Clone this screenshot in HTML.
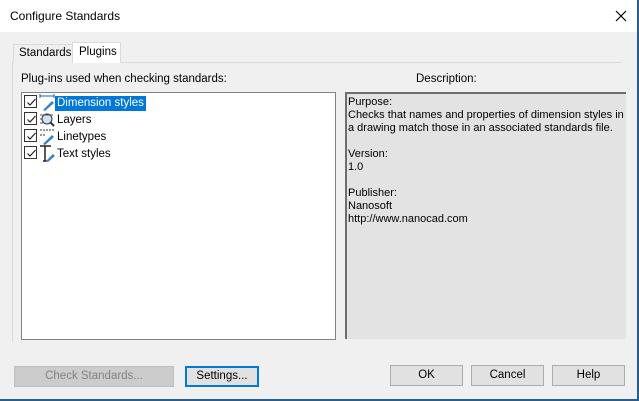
<!DOCTYPE html>
<html><head><style>
*{box-sizing:border-box;margin:0;padding:0}
body{width:639px;height:401px;background:#f0f0f0;font-family:"Liberation Sans",sans-serif;font-size:11.5px;color:#000;position:relative;overflow:hidden}
.abs{position:absolute}
.title{left:0;top:0;width:638px;height:32px;background:#fff}
.btn{position:absolute;height:21px;border:1px solid #adadad;background:#e1e1e1;text-align:center;line-height:19px}
.cb{position:absolute;left:2px;width:13px;height:13px;border:1px solid #333;background:#fff}
.cb svg{position:absolute;left:1px;top:1px}
.item{position:absolute;left:0;height:17px;width:200px}
.lbl{position:absolute;left:33px;top:1px;line-height:15px;padding:0 2px}
</style></head><body>
<div class="abs title"></div>
<div class="abs" style="left:10px;top:9px;font-size:12px">Configure Standards</div>
<svg class="abs" style="left:615px;top:10px" width="12" height="12"><path d="M1 1L11 11M11 1L1 11" stroke="#000" stroke-width="1.2"/></svg>
<div class="abs" style="left:637px;top:0;width:2px;height:401px;background:#2b5d8a"></div>
<div class="abs" style="left:0;top:399px;width:639px;height:2px;background:#2b5d8a"></div>
<div class="abs" style="left:12px;top:62px;width:610px;height:1px;background:#dadada"></div>
<div class="abs" style="left:12px;top:62px;width:1px;height:280px;background:#dadada"></div>
<div class="abs" style="left:13px;top:44px;width:60px;height:19px;border:1px solid #dadada;border-bottom:none;background:#f0f0f0;padding-left:5px;line-height:17px">Standards</div>
<div class="abs" style="left:72px;top:42px;width:49px;height:21px;border:1px solid #dadada;border-bottom:none;background:#fff;padding-left:6px;line-height:19px">Plugins</div>
<div class="abs" style="left:21px;top:73px">Plug-ins used when checking standards:</div>
<div class="abs" style="left:416px;top:73px">Description:</div>
<div class="abs" style="left:21px;top:92px;width:315px;height:248px;background:#fff;border:1px solid #828282">
 <div class="item" style="top:2px"><div class="cb"><svg width="11" height="11"><path d="M1.5 5.5L4 8L9.5 2" stroke="#222" fill="none" stroke-width="1.2"/></svg></div>
  <svg class="abs" style="left:17px;top:-1px" width="17" height="18"><path d="M1 2H15M1 0V4M15 0V4" stroke="#1b5fa0" fill="none"/><path d="M4 16L13 7L15 9L6 17Z" fill="#3a80c8"/></svg>
  <div class="lbl" style="background:#0078d7;color:#fff">Dimension styles</div></div>
 <div class="item" style="top:19px"><div class="cb"><svg width="11" height="11"><path d="M1.5 5.5L4 8L9.5 2" stroke="#222" fill="none" stroke-width="1.2"/></svg></div>
  <svg class="abs" style="left:17px;top:-1px" width="17" height="18"><circle cx="8" cy="8" r="5" fill="#cfe3f5" stroke="#333"/><path d="M11 11L15 15" stroke="#333" stroke-width="2"/><path d="M1 4H14M1 8H3M1 12H4" stroke="#555"/></svg>
  <div class="lbl">Layers</div></div>
 <div class="item" style="top:36px"><div class="cb"><svg width="11" height="11"><path d="M1.5 5.5L4 8L9.5 2" stroke="#222" fill="none" stroke-width="1.2"/></svg></div>
  <svg class="abs" style="left:17px;top:-1px" width="17" height="18"><path d="M1 2H15M1 7H6" stroke="#333" stroke-dasharray="2 1"/><path d="M4 16L13 7L15 9L6 17Z" fill="#3a80c8"/></svg>
  <div class="lbl">Linetypes</div></div>
 <div class="item" style="top:53px"><div class="cb"><svg width="11" height="11"><path d="M1.5 5.5L4 8L9.5 2" stroke="#222" fill="none" stroke-width="1.2"/></svg></div>
  <svg class="abs" style="left:17px;top:-1px" width="17" height="18"><path d="M1 1H12M6 1V16M4 16H8" stroke="#222" stroke-width="1.5" fill="none"/><path d="M7 16L14 9L16 11L9 17Z" fill="#3a80c8"/></svg>
  <div class="lbl">Text styles</div></div>
</div>
<div class="abs" style="left:345px;top:92px;width:281px;height:247px;background:#e3e3e3;border-top:2px solid #6e6e6e;border-left:2px solid #6e6e6e;padding:2px 1px;line-height:13px;font-size:11px;white-space:nowrap;overflow:hidden">
Purpose:<br>Checks that names and properties of dimension styles in<br>a drawing match those in an associated standards file.<br><br>Version:<br>1.0<br><br>Publisher:<br>Nanosoft<br>http://www.nanocad.com
</div>
<div class="btn" style="left:14px;top:366px;width:160px;background:#cccccc;border-color:#bfbfbf;color:#838383">Check Standards...</div>
<div class="btn" style="left:185px;top:366px;width:74px;border:2px solid #0078d7;line-height:17px">Settings...</div>
<div class="btn" style="left:390px;top:365px;width:73px">OK</div>
<div class="btn" style="left:471px;top:365px;width:73px">Cancel</div>
<div class="btn" style="left:552px;top:365px;width:73px">Help</div>
</body></html>
